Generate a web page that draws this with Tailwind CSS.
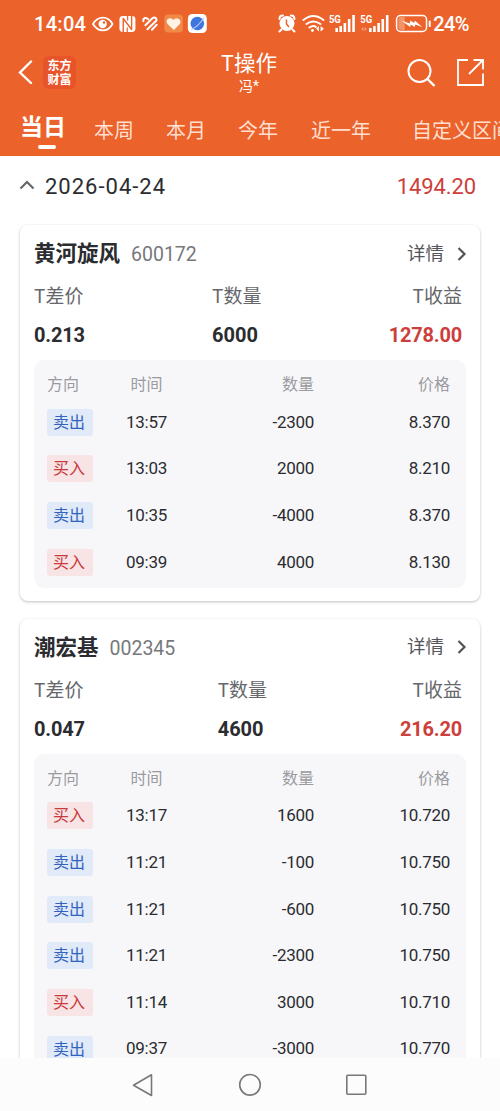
<!DOCTYPE html>
<html lang="zh-CN">
<head>
  <meta charset="UTF-8" />
  <meta name="viewport" content="width=device-width, initial-scale=1.0" />
  <title>T操作</title>
  <script src="https://cdn.jsdelivr.net/npm/@tailwindcss/browser@4"></script>
</head>
<body class="bg-white font-[Roboto,'Noto_Sans_CJK_SC',sans-serif] text-[#2b2c30]">
  <div class="w-[500px] h-[1111px] flex flex-col overflow-hidden">
    <header class="h-[156px] shrink-0 bg-[#ec622b] text-white flex flex-col overflow-hidden">
      <!-- status bar -->
      <div class="h-[47px] shrink-0 flex items-center pl-[34px] pr-[31px]">
        <span class="text-[20px] leading-none font-medium tracking-[0.3px] w-[58px]">14:04</span>
        <svg class="w-[174px] h-[20px]" viewBox="92 14 174 20" fill="none">
          <path d="M93 24c5-8.500 15-8.500 19.500 0c-4.500 8.500-14.500 8.500-19.500 0z" stroke="#fff" stroke-width="1.800" />
          <circle cx="102.700" cy="24" r="4.200" fill="#fff" />
          <circle cx="104" cy="22.500" r="1.200" fill="#ec622b" />
          <rect x="119.500" y="16" width="16" height="16" rx="3.500" fill="#fff" />
          <path d="M123.300 32V18.500L131.700 29.500V16" stroke="#ec622b" stroke-width="1.400" stroke-linejoin="round" />
          <path d="M127.300 27.500V32M127.700 16V20.500" stroke="#ec622b" stroke-width="1.200" />
          <path d="M143.500 21.300q-.5-2.500 1.500-3.300q1.800-.5 3.300 1.200M145.500 25.300l7-7q2-1.500 3.300-.300q1.500 1.500 0 3.200M147.500 29.300l9-8.800M152 29.800l4.800-5" stroke="#fff" stroke-width="2" stroke-linecap="round" />
          <rect x="164.500" y="14.500" width="18.500" height="18" rx="4" fill="#f18a48" />
          <path d="M174 30l-6.300-6c-3.200-4 2.500-8 5.800-4c3.500-3.500 9-.500 6.500 4z" fill="#fff3e6" />
          <rect x="188" y="14" width="19" height="19" rx="4.500" fill="#fff" />
          <circle cx="197.500" cy="23.500" r="6.800" fill="#3f76dd" />
          <path d="M191.500 29.500q7-3 12.500-11.500" stroke="#a9c6fa" stroke-width="1.300" />
        </svg>
        <svg class="w-[168px] h-[22px]" viewBox="266 13 168 22" fill="none">
          <circle cx="287" cy="23.500" r="7.500" fill="#fff" />
          <path d="M279.500 19q0-3.500 3.500-3.500M291 15.500q3.500 0 3.500 3.500M281.500 29.500l-2 2M292.500 29.500l2 2" stroke="#fff" stroke-width="2" stroke-linecap="round" />
          <path d="M286.500 19.500v4.500l2.500 3" stroke="#ec622b" stroke-width="1.500" />
          <path d="M303.500 20q10-8 20 0M306.500 24q7-5 14 0M309.500 27.500q4-2.500 6.500-.500" stroke="#fff" stroke-width="2" stroke-linecap="round" />
          <circle cx="312.500" cy="30.500" r="1.400" fill="#fff" />
          <path d="M319 26v5.500l-2.800-2.800zM320.700 31.500v-5.500l3.300 2.800z" fill="#fff" />
          <text x="329" y="23.500" fill="#fff" font-size="11.500" font-weight="700" textLength="12" lengthAdjust="spacingAndGlyphs">5G</text>
          <path d="M336.800 32v-4M340.800 32v-6M345 32v-9M349.300 32v-13M353.700 32V15" stroke="#fff" stroke-width="2.600" />
          <text x="360.500" y="23.500" fill="#fff" font-size="11.500" font-weight="700" textLength="12" lengthAdjust="spacingAndGlyphs">5G</text>
          <path d="M363.500 27v4l-2.200-2zM364.700 31v-4l2.200 2z" fill="#f6a486" />
          <path d="M370.500 32v-4M374.600 32v-6M378.800 32v-9M383 32v-13M387.400 32V15" stroke="#fff" stroke-width="2.600" />
          <rect x="396.800" y="15.500" width="30" height="16" rx="4" stroke="#fff" stroke-width="1.500" />
          <path d="M398.500 20q0-3 3-3h3.500v13h-3.500q-3 0-3-3z" fill="#f39168" />
          <path d="M401.500 20.500l8.500 3 .5-3 4 2.500.500-2.500 7.500 6.500-7-2.500-.5 2.500-4-2.500-.5 2.500z" fill="#fff" />
          <path d="M430 21.500v4.500" stroke="#fff" stroke-width="2" stroke-linecap="round" />
        </svg>
        <span class="text-[20px] leading-none font-medium tracking-[-0.6px]">24%</span>
      </div>

      <!-- title bar -->
      <div class="h-[50px] shrink-0 grid grid-cols-[180px_1fr_180px] items-center">
        <div class="flex items-center pl-[18px]">
          <svg class="w-[15px] h-[24px] mr-[10px]" viewBox="0 0 15 24" fill="none">
            <path d="M13 1.500L2 12.500L13 23" stroke="#fff" stroke-width="2.400" stroke-linecap="round" />
          </svg>
          <div class="w-[33px] h-[33px] rounded-md bg-[#e8542a] flex flex-col items-center justify-center pt-px text-[12px] leading-[14px] font-bold">
            <span>东方</span>
            <span>财富</span>
          </div>
        </div>
        <div class="flex flex-col items-center pr-[2px]">
          <h1 class="text-[21.500px] leading-[27px] font-['Noto_Sans_CJK_SC',sans-serif]">T操作</h1>
          <p class="mt-px text-[14px] leading-[20px]">冯*</p>
        </div>
        <div class="flex items-center justify-end gap-[20px] pr-[15px]">
          <svg class="w-[29px] h-[29px]" viewBox="0 0 29 29" fill="none" stroke="#fff" stroke-width="2">
            <circle cx="12.500" cy="13" r="11" />
            <path d="M20.500 21L27.500 28" stroke-width="2.400" />
          </svg>
          <svg class="w-[29px] h-[29px]" viewBox="0 0 29 29" fill="none" stroke="#fff" stroke-width="1.800">
            <path d="M12 2H2V27H27V15.500M17.500 2H27V11.500M27 2L13 16" />
          </svg>
        </div>
      </div>

      <!-- range tabs -->
      <nav class="h-[59px] shrink-0 flex pl-[20px] text-[20px] text-[#ffdfcf] whitespace-nowrap leading-[28px]">
        <a href="#" class="w-[74px] shrink-0 pt-[17px] text-white text-[23px] font-bold">
          当日
          <span class="block w-[18px] h-[4px] rounded-full bg-white ml-[18px] mt-[3px]"></span>
        </a>
        <a href="#" class="w-[72px] shrink-0 pt-[20px]">本周</a>
        <a href="#" class="w-[72px] shrink-0 pt-[20px]">本月</a>
        <a href="#" class="w-[73px] shrink-0 pt-[20px]">今年</a>
        <a href="#" class="w-[101px] shrink-0 pt-[20px]">近一年</a>
        <a href="#" class="shrink-0 pt-[20px]">自定义区间</a>
      </nav>
    </header>

    <main class="flex-1 min-h-0 overflow-hidden">
      <div class="h-[69px] flex items-center pl-[19px] pr-[24px] pb-[9px] text-[22px]">
        <svg class="w-[16px] h-[10px] mr-[10px] mb-[2px]" viewBox="0 0 16 10" fill="none">
          <path d="M1.500 8.500L8 2L14.500 8.500" stroke="#66676b" stroke-width="2.200" />
        </svg>
        <span class="tracking-[1px]">2026-04-24</span>
        <span class="ml-auto text-[#cc3f3d] tracking-[-0.1px]">1494.20</span>
      </div>
      <div id="list" class="flex flex-col gap-[18px] px-[20px]"></div>
    </main>

    <!-- system navigation -->
    <footer class="h-[53px] shrink-0 bg-[#fcfcfc] flex justify-center gap-[83px]">
      <svg class="w-[24px] h-[24px] mt-[15px]" viewBox="0 0 24 24" fill="none" stroke="#77787a" stroke-width="1.600">
        <path d="M20.500 1.800V22.500L2.500 12.200Z" stroke-linejoin="round" />
      </svg>
      <svg class="w-[24px] h-[24px] mt-[15px]" viewBox="0 0 24 24" fill="none" stroke="#77787a" stroke-width="1.600">
        <circle cx="12" cy="11.800" r="10.300" />
      </svg>
      <svg class="w-[24px] h-[24px] mt-[15px]" viewBox="0 0 24 24" fill="none" stroke="#77787a" stroke-width="1.600">
        <rect x="1.800" y="2.300" width="19" height="19" rx="1" />
      </svg>
    </footer>
  </div>

  <script>
    const stocks = [
      {
        name: '黄河旋风', code: '600172', diff: '0.213', qty: '6000', profit: '1278.00',
        trades: [
          ['卖出', '13:57', '-2300', '8.370'],
          ['买入', '13:03', '2000', '8.210'],
          ['卖出', '10:35', '-4000', '8.370'],
          ['买入', '09:39', '4000', '8.130']
        ]
      },
      {
        name: '潮宏基', code: '002345', diff: '0.047', qty: '4600', profit: '216.20',
        trades: [
          ['买入', '13:17', '1600', '10.720'],
          ['卖出', '11:21', '-100', '10.750'],
          ['卖出', '11:21', '-600', '10.750'],
          ['卖出', '11:21', '-2300', '10.750'],
          ['买入', '11:14', '3000', '10.710'],
          ['卖出', '09:37', '-3000', '10.770']
        ]
      }
    ];

    function tradeRow([side, time, qty, price]) {
      const badge = side === '卖出' ? 'bg-[#e0eaf8] text-[#3263c0]' : 'bg-[#f8e3e5] text-[#c93a3c]';
      return `
        <div class="h-[46.670px] grid grid-cols-[46px_107px_1fr_136px] items-center text-[17px] tracking-[-0.3px]">
          <span class="h-[27px] rounded-[3px] pl-[6px] text-[16px] leading-[27px] tracking-normal ${badge}">${side}</span>
          <span class="text-center">${time}</span>
          <span class="text-right">${qty}</span>
          <span class="text-right">${price}</span>
        </div>`;
    }

    function stockCard(s) {
      return `
        <section class="rounded-lg bg-white px-[14px] pb-[13px] shadow-[0_1px_3px_rgba(0,0,0,0.25)]">
          <div class="h-[58px] pt-px flex items-center">
            <h2 class="text-[21.500px] font-bold">${s.name}</h2>
            <span class="ml-[11px] text-[19.500px] text-[#77787c]">${s.code}</span>
            <a href="#" class="ml-auto flex items-center text-[18.500px] text-[#55565a]">
              详情
              <svg class="w-[10px] h-[14px] ml-[13px] mr-[-1px] mb-[2px]" viewBox="0 0 10 14" fill="none">
                <path d="M1.500 1L7.500 7L1.500 13" stroke="#55565a" stroke-width="2.200" />
              </svg>
            </a>
          </div>
          <div class="h-[77px] flex justify-between pr-[4px] text-[19px] leading-[24px] text-[#66676b]">
            <div>
              <p class="font-['Noto_Sans_CJK_SC',sans-serif]">T差价</p>
              <p class="mt-[16px] text-[20px] font-bold text-[#2b2c30] tracking-[-0.2px]">${s.diff}</p>
            </div>
            <div>
              <p class="font-['Noto_Sans_CJK_SC',sans-serif]">T数量</p>
              <p class="mt-[16px] text-[20px] font-bold text-[#2b2c30]">${s.qty}</p>
            </div>
            <div class="text-right">
              <p class="font-['Noto_Sans_CJK_SC',sans-serif]">T收益</p>
              <p class="mt-[16px] text-[20px] font-bold text-[#cc3f3d] tracking-[-0.2px]">${s.profit}</p>
            </div>
          </div>
          <div class="rounded-[10px] bg-[#f7f7fa] pl-[13px] pr-[16px] pb-[2px]">
            <div class="h-[39px] pt-[13px] grid grid-cols-[46px_107px_1fr_136px] text-[16px] leading-[24px] text-[#9a9b9f]">
              <span>方向</span>
              <span class="text-center">时间</span>
              <span class="text-right">数量</span>
              <span class="text-right">价格</span>
            </div>
            ${s.trades.map(tradeRow).join('')}
          </div>
        </section>`;
    }

    document.getElementById('list').innerHTML = stocks.map(stockCard).join('');
  </script>
</body>
</html>
